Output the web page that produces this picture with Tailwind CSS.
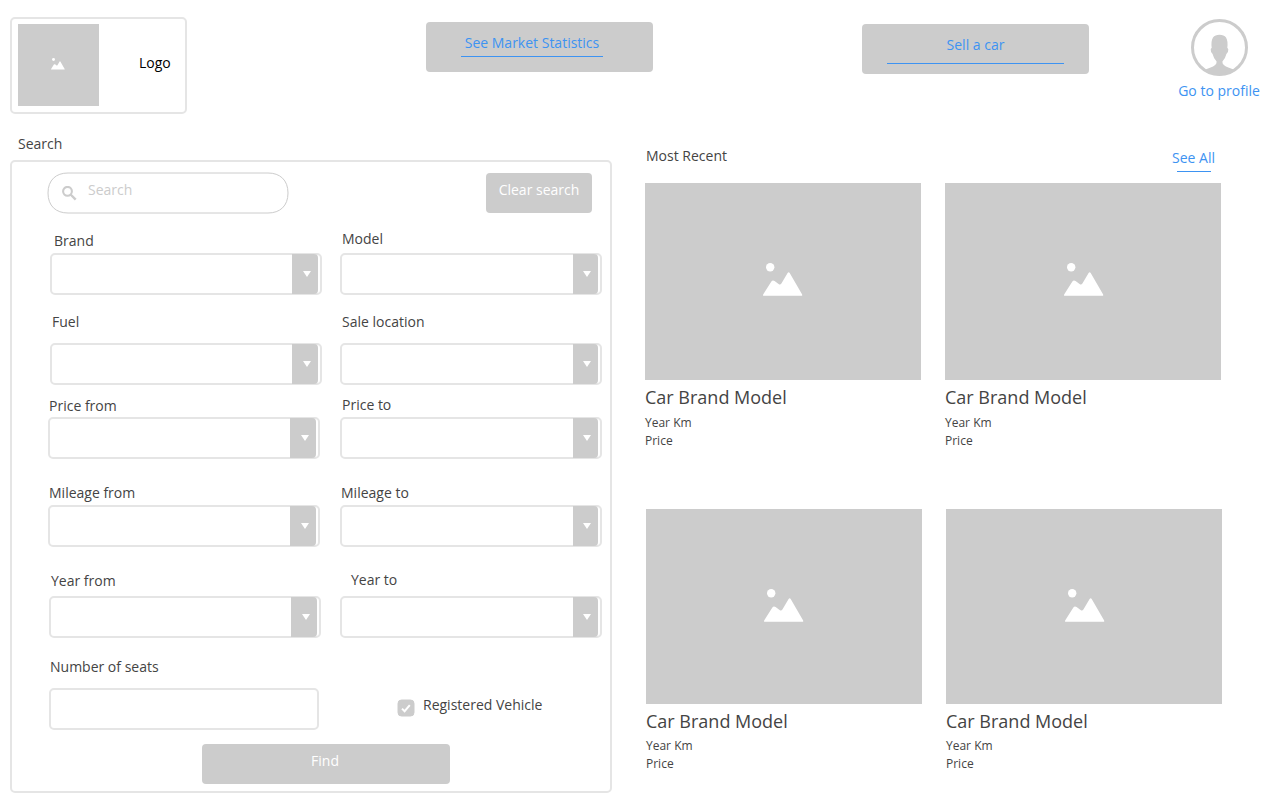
<!DOCTYPE html>
<html lang="en">
<head>
<meta charset="utf-8">
<title>Car marketplace</title>
<script src="https://cdn.jsdelivr.net/npm/@tailwindcss/browser@4"></script>
</head>
<body class="bg-white">
<svg class="hidden">
  <symbol id="picture" viewBox="0 0 40 34">
    <circle cx="7.2" cy="4.3" r="4.2"/>
    <path d="M.1 32.8Q-.1 32 .3 31.3L8.2 18.7Q9.6 16.6 11.6 18L15.9 21.2Q17.4 22 18.4 20.4L24.6 9.9Q25.7 8.4 26.7 9.9L39 31.3Q39.4 32 39.1 32.8Z"/>
  </symbol>
  <symbol id="caret" viewBox="0 0 8 6"><path d="M0 0H8L4 6Z"/></symbol>
</svg>
<div class="w-[1280px] h-[800px] overflow-hidden font-['Open_Sans',sans-serif] text-sm leading-5 text-[#444]">
  <header class="flex items-start h-[134px] pl-2.5">
    <div class="mt-[17px] flex w-[177px] h-[97px] border-2 border-[#e5e5e5] rounded-[5px] pl-1.5 pt-[5px]">
      <div class="w-[81px] h-[82px] bg-[#ccc] pl-[33px] pt-[34px] shrink-0"><svg class="w-[14px] h-3 fill-white"><use href="#picture"/></svg></div>
      <span class="ml-10 mt-[29px] text-black">Logo</span>
    </div>
    <a class="mt-[22px] ml-[239px] w-[227px] h-[50px] bg-[#ccc] rounded-[4px] pt-[11px] pl-[35px] text-[#3d93f2]">
      <span class="block w-[142px] h-6 border-b border-[#3d93f2] text-center whitespace-nowrap">See Market Statistics</span>
    </a>
    <a class="mt-[24px] ml-[209px] w-[227px] h-[50px] bg-[#ccc] rounded-[4px] pt-[11px] pl-[25px] text-[#3d93f2]">
      <span class="block w-[177px] h-[29px] border-b border-[#3d93f2] text-center">Sell a car</span>
    </a>
    <a class="mt-[19px] ml-[84px] w-[92px] flex flex-col items-center text-[#3d93f2]">
      <svg class="w-[57px] h-[57px]" viewBox="0 0 57 57">
        <clipPath id="face"><circle cx="28.5" cy="28.5" r="28"/></clipPath>
        <path clip-path="url(#face)" fill="#ccc" d="M10 57V53Q13 50.5 19 48.7Q26 46.5 25.6 42.5Q22.8 40 21.6 35Q19.6 34 19.7 30.5Q19.8 29 20.7 29Q19.8 22 22 18.5Q24 15.8 28.5 15.8Q33 15.8 35 18.5Q37.2 22 36.3 29Q37.2 29 37.3 30.5Q37.4 34 35.4 35Q34.2 40 31.4 42.5Q31 46.5 38 48.7Q44 50.5 47 53V57Z"/>
        <circle cx="28.5" cy="28.5" r="27" fill="none" stroke="#ccc" stroke-width="3"/>
      </svg>
      <span class="mt-[5px] whitespace-nowrap">Go to profile</span>
    </a>
  </header>

  <main class="flex items-start">
    <section class="w-[602px] ml-2.5 shrink-0">
      <h2 class="pl-2 h-[26px]">Search</h2>
      <form class="h-[633px] border-2 border-[#e5e5e5] rounded-[5px] pt-2.5">
        <div class="flex items-start h-[42px] pl-[35px]">
          <div class="relative w-[242px] h-[42px] flex pl-[15px]">
            <svg class="absolute inset-0 w-[242px] h-[42px]" fill="none" stroke="#ccc"><path d="M21 1H221C233 1 241 8 241 21S233 41 221 41H21C9 41 1 34 1 21S9 1 21 1Z"/></svg>
            <svg class="mt-[14px] w-[15px] h-[15px]" viewBox="0 0 15 15" fill="none" stroke="#ccc" stroke-width="2.1"><circle cx="5.5" cy="5.3" r="4.4"/><path d="M8.6 8.5L13.7 13.6" stroke-width="2.4"/></svg>
            <span class="ml-[11px] mt-2 text-[#ccc]">Search</span>
          </div>
          <button type="button" class="mt-px ml-[197px] w-[106px] h-10 bg-[#ccc] rounded-[4px] text-white pb-[6px]">Clear search</button>
        </div>
        <div class="flex items-start h-[516px] pl-9">
          <div class="w-[292px] shrink-0 flex flex-col">
            <label class="mt-[17px] ml-1.5">Brand</label>
            <div class="mt-0.5 ml-0.5 w-[272px] h-[42px] border-2 border-[#e5e5e5] rounded-[5px] flex justify-end"><i class="-my-px mr-0.5 w-[26px] h-10 bg-[#ccc] rounded-r-[4px] pl-[11px] pt-[17px]"><svg class="w-2 h-1.5 fill-white"><use href="#caret"/></svg></i></div>
            <label class="mt-[17px] ml-1">Fuel</label>
            <div class="mt-[11px] ml-0.5 w-[272px] h-[42px] border-2 border-[#e5e5e5] rounded-[5px] flex justify-end"><i class="-my-px mr-0.5 w-[26px] h-10 bg-[#ccc] rounded-r-[4px] pl-[11px] pt-[17px]"><svg class="w-2 h-1.5 fill-white"><use href="#caret"/></svg></i></div>
            <label class="mt-[11px] ml-px">Price from</label>
            <div class="mt-px w-[272px] h-[42px] border-2 border-[#e5e5e5] rounded-[5px] flex justify-end"><i class="-my-px mr-0.5 w-[26px] h-10 bg-[#ccc] rounded-r-[4px] pl-[11px] pt-[17px]"><svg class="w-2 h-1.5 fill-white"><use href="#caret"/></svg></i></div>
            <label class="mt-6 ml-px">Mileage from</label>
            <div class="mt-0.5 w-[272px] h-[42px] border-2 border-[#e5e5e5] rounded-[5px] flex justify-end"><i class="-my-px mr-0.5 w-[26px] h-10 bg-[#ccc] rounded-r-[4px] pl-[11px] pt-[17px]"><svg class="w-2 h-1.5 fill-white"><use href="#caret"/></svg></i></div>
            <label class="mt-6 ml-[3px]">Year from</label>
            <div class="mt-[5px] ml-px w-[272px] h-[42px] border-2 border-[#e5e5e5] rounded-[5px] flex justify-end"><i class="-my-px mr-0.5 w-[26px] h-10 bg-[#ccc] rounded-r-[4px] pl-[11px] pt-[17px]"><svg class="w-2 h-1.5 fill-white"><use href="#caret"/></svg></i></div>
            <label class="mt-[19px] ml-0.5">Number of seats</label>
            <div class="mt-[11px] ml-px w-[270px] h-[42px] border-2 border-[#e5e5e5] rounded-[5px]"></div>
          </div>
          <div class="w-[262px] shrink-0 flex flex-col">
            <label class="mt-[15px] ml-0.5">Model</label>
            <div class="mt-1 h-[42px] border-2 border-[#e5e5e5] rounded-[5px] flex justify-end"><i class="-my-px mr-0.5 w-[25px] h-10 bg-[#ccc] rounded-r-[4px] pl-[10px] pt-[17px]"><svg class="w-2 h-1.5 fill-white"><use href="#caret"/></svg></i></div>
            <label class="mt-[17px] ml-0.5">Sale location</label>
            <div class="mt-[11px] h-[42px] border-2 border-[#e5e5e5] rounded-[5px] flex justify-end"><i class="-my-px mr-0.5 w-[25px] h-10 bg-[#ccc] rounded-r-[4px] pl-[10px] pt-[17px]"><svg class="w-2 h-1.5 fill-white"><use href="#caret"/></svg></i></div>
            <label class="mt-2.5 ml-0.5">Price to</label>
            <div class="mt-0.5 h-[42px] border-2 border-[#e5e5e5] rounded-[5px] flex justify-end"><i class="-my-px mr-0.5 w-[25px] h-10 bg-[#ccc] rounded-r-[4px] pl-[10px] pt-[17px]"><svg class="w-2 h-1.5 fill-white"><use href="#caret"/></svg></i></div>
            <label class="mt-6 ml-px">Mileage to</label>
            <div class="mt-0.5 h-[42px] border-2 border-[#e5e5e5] rounded-[5px] flex justify-end"><i class="-my-px mr-0.5 w-[25px] h-10 bg-[#ccc] rounded-r-[4px] pl-[10px] pt-[17px]"><svg class="w-2 h-1.5 fill-white"><use href="#caret"/></svg></i></div>
            <label class="mt-[23px] ml-[11px]">Year to</label>
            <div class="mt-1.5 h-[42px] border-2 border-[#e5e5e5] rounded-[5px] flex justify-end"><i class="-my-px mr-0.5 w-[25px] h-10 bg-[#ccc] rounded-r-[4px] pl-[10px] pt-[17px]"><svg class="w-2 h-1.5 fill-white"><use href="#caret"/></svg></i></div>
            <label class="mt-[57px] ml-[57px] flex items-start">
              <svg class="mt-1 w-[18px] h-[18px]" viewBox="0 0 18 18"><rect x="1" y="1" width="16" height="16" rx="3.5" fill="#ccc" stroke="#ccc"/><path d="M5 9.6L7.6 12.2L12.8 6.2" fill="none" stroke="#fff" stroke-width="2"/></svg>
              <span class="ml-2">Registered Vehicle</span>
            </label>
          </div>
        </div>
        <button type="button" class="block mt-[14px] ml-[190px] w-[248px] h-10 bg-[#ccc] rounded-[4px] text-white pb-[6px] pr-[2px]">Find</button>
      </form>
    </section>

    <section class="ml-[33px] w-[577px] shrink-0">
      <div class="flex justify-between h-[49px]">
        <h2 class="mt-3 ml-px">Most Recent</h2>
        <a class="mt-[14px] mr-[7px] flex flex-col items-center text-[#3d93f2]">See All<span class="block mt-[3px] w-[34px] h-px bg-[#3d93f2]"></span></a>
      </div>
      <div class="flex gap-6 h-[326px]">
        <article class="w-[276px]">
          <div class="h-[197px] bg-[#ccc] pl-[118px] pt-20"><svg class="w-10 h-[34px] fill-white"><use href="#picture"/></svg></div>
          <h3 class="mt-1 text-lg leading-[26px]">Car Brand Model</h3>
          <p class="mt-1 text-xs leading-[18px]">Year Km<br>Price</p>
        </article>
        <article class="w-[276px]">
          <div class="h-[197px] bg-[#ccc] pl-[119px] pt-20"><svg class="w-10 h-[34px] fill-white"><use href="#picture"/></svg></div>
          <h3 class="mt-1 text-lg leading-[26px]">Car Brand Model</h3>
          <p class="mt-1 text-xs leading-[18px]">Year Km<br>Price</p>
        </article>
      </div>
      <div class="flex gap-6 pl-px">
        <article class="w-[276px]">
          <div class="h-[195px] bg-[#ccc] pl-[118px] pt-20"><svg class="w-10 h-[34px] fill-white"><use href="#picture"/></svg></div>
          <h3 class="mt-1 text-lg leading-[26px]">Car Brand Model</h3>
          <p class="mt-[3px] text-xs leading-[18px]">Year Km<br>Price</p>
        </article>
        <article class="w-[276px]">
          <div class="h-[195px] bg-[#ccc] pl-[119px] pt-20"><svg class="w-10 h-[34px] fill-white"><use href="#picture"/></svg></div>
          <h3 class="mt-1 text-lg leading-[26px]">Car Brand Model</h3>
          <p class="mt-[3px] text-xs leading-[18px]">Year Km<br>Price</p>
        </article>
      </div>
    </section>
  </main>
</div>
</body>
</html>
